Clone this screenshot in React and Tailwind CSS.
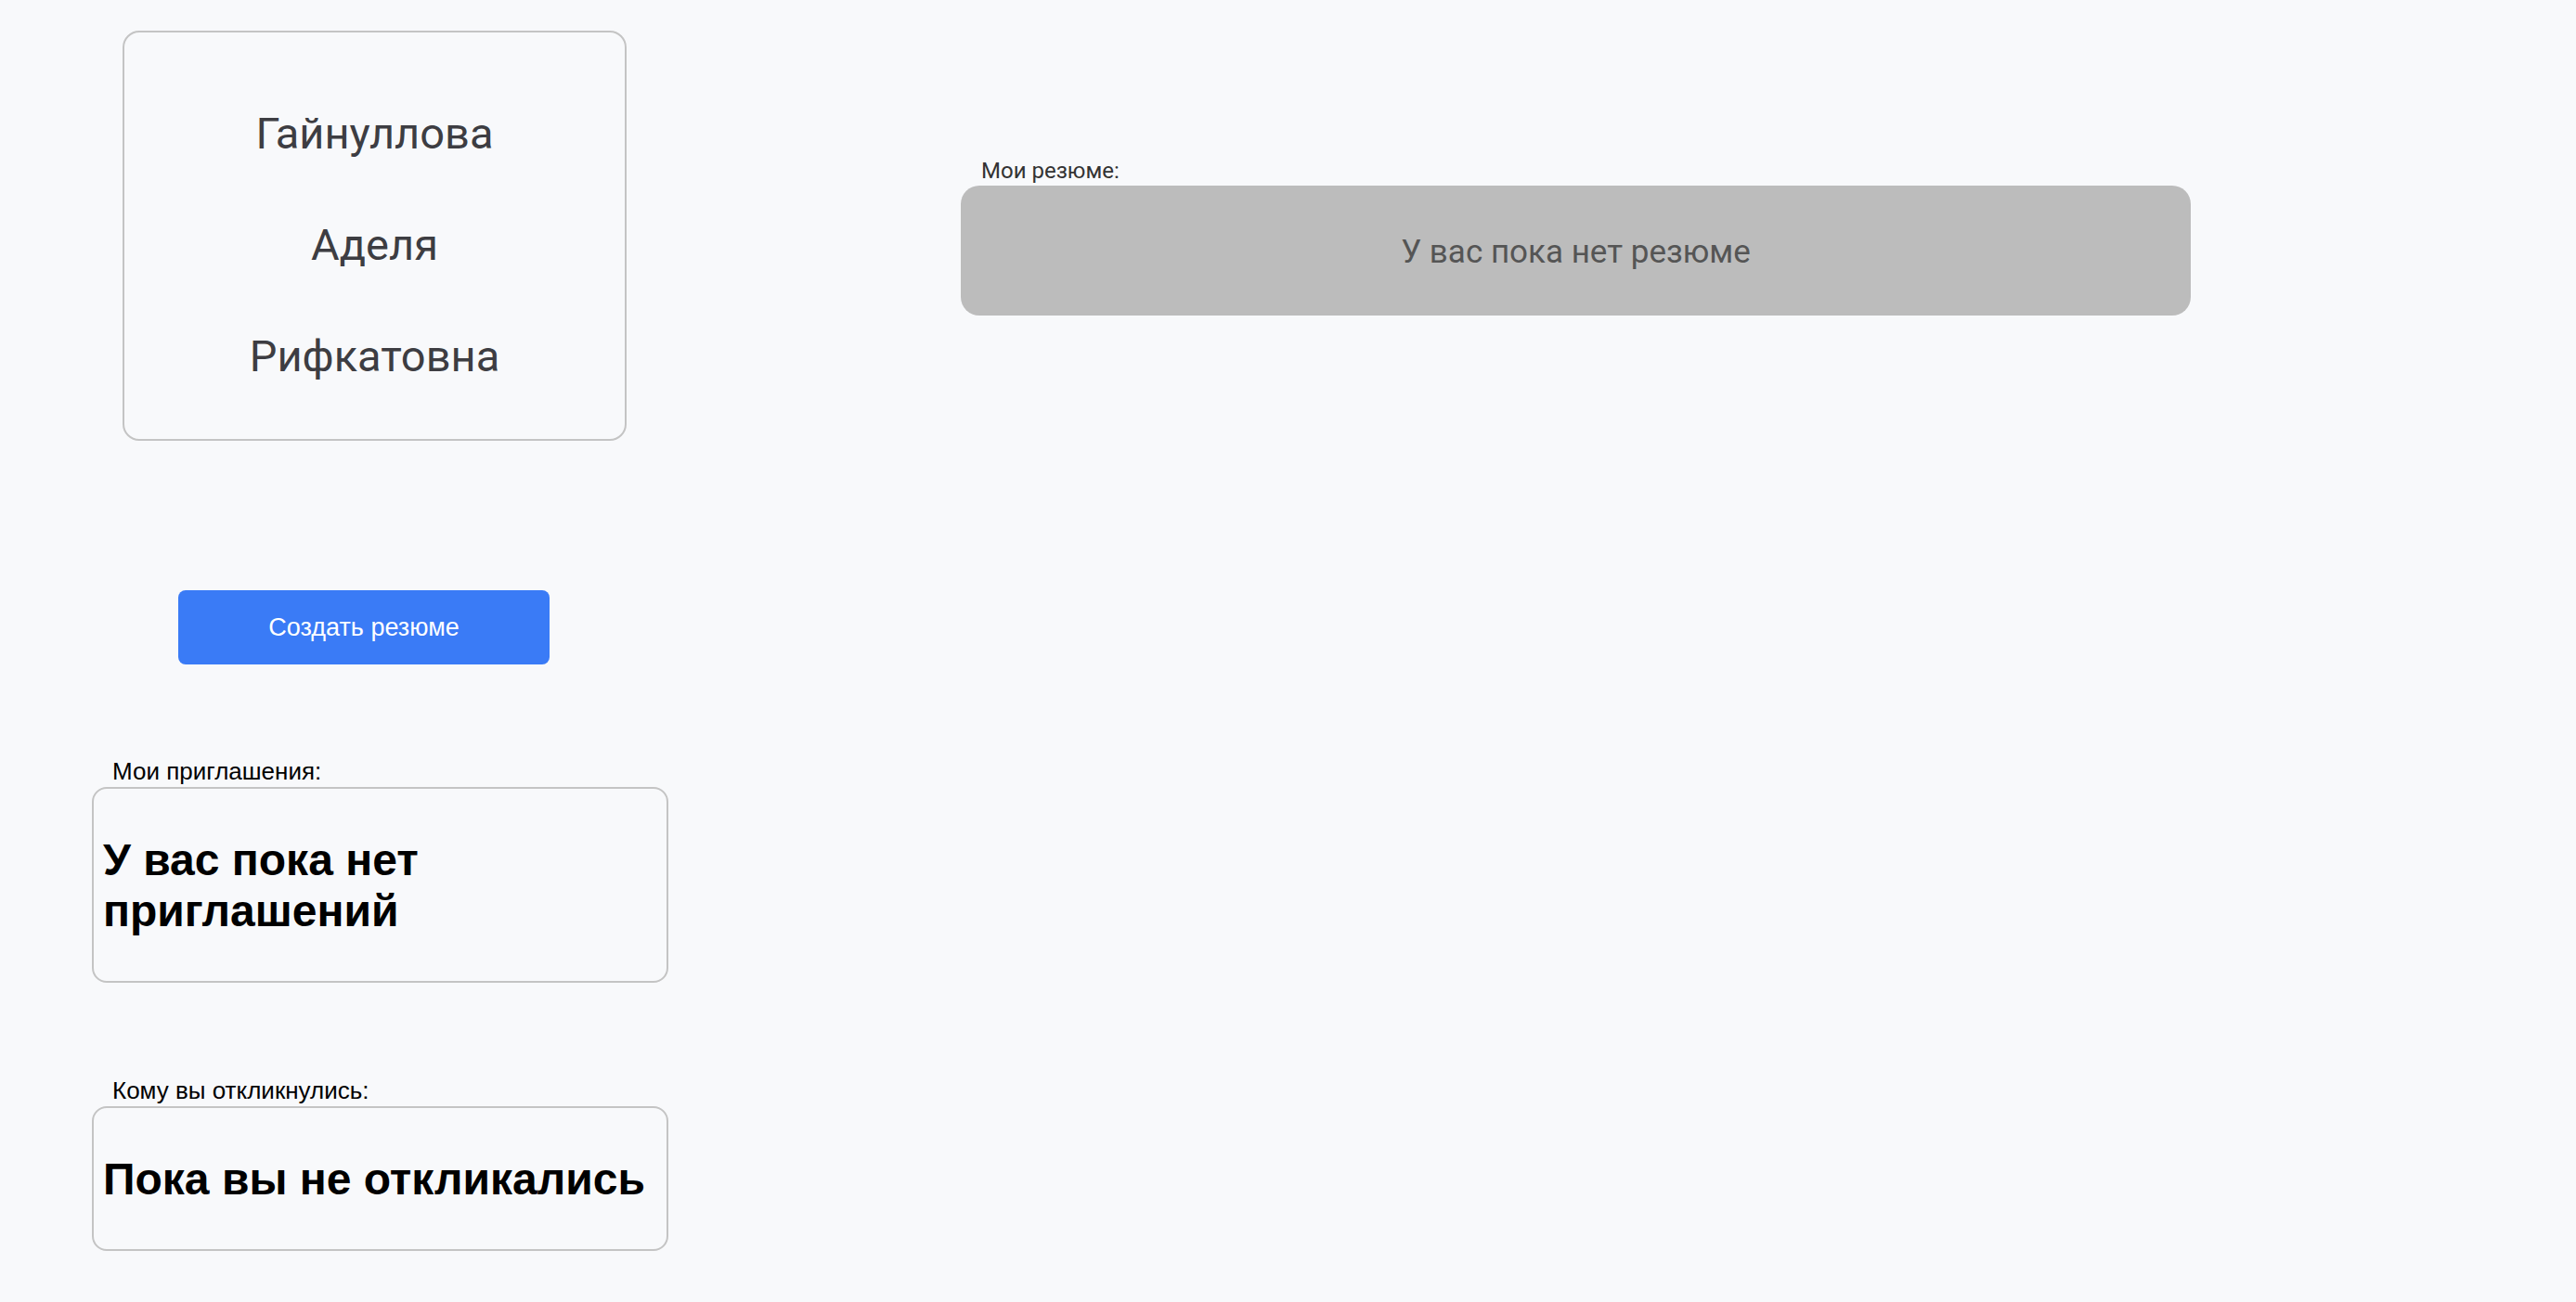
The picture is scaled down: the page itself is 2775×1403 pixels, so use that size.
export default function App() {
  return (
    <div className="min-h-screen bg-[#f8f9fb] flex">
      <aside className="w-[1035px] shrink-0 flex flex-col items-start">
        <NameCard lines={['Гайнуллова', 'Аделя', 'Рифкатовна']} />

        <button className="mt-[161px] ml-[192px] w-[400px] h-[80px] rounded-[8px] bg-[#3a7bf6] text-white text-[27px] font-['Liberation_Sans',Arial,sans-serif]">
          Создать резюме
        </button>

        <Section label="Мои приглашения:" className="mt-[101px]" height="h-[211px]">
          У вас пока нет приглашений
        </Section>

        <Section label="Кому вы откликнулись:" className="mt-[102px]" height="h-[156px]">
          Пока вы не откликались
        </Section>
      </aside>

      <main className="w-[1325px] shrink-0 pt-[171px] font-['Roboto',sans-serif]">
        <p className="ml-[22px] text-[24px] leading-[27px] text-[#333]">Мои резюме:</p>
        <div className="mt-[2px] h-[140px] pt-[4px] rounded-[20px] bg-[#bcbcbc] flex items-center justify-center">
          <p className="text-[35px] text-[#555]">У вас пока нет резюме</p>
        </div>
      </main>
    </div>
  )
}

function NameCard({ lines }) {
  return (
    <div className="mt-[33px] ml-[132px] w-[543px] h-[442px] pt-[49px] rounded-[18px] border-2 border-[#c4c4c4] font-['Roboto',sans-serif] text-[#3d3d42] text-center">
      {lines.map(line => (
        <p key={line} className="text-[47px] leading-[120px]">{line}</p>
      ))}
    </div>
  )
}

function Section({ label, className, height, children }) {
  return (
    <div className={`flex flex-col items-start font-['Liberation_Sans',Arial,sans-serif] ${className}`}>
      <p className="ml-[121px] text-[26px] text-black leading-[28px]">{label}</p>
      <div className={`mt-[3px] ml-[99px] w-[621px] ${height} rounded-[16px] border-2 border-[#c4c4c4] flex items-center pl-[10px] pr-[6px]`}>
        <h2 className="text-[48px] font-bold text-black leading-[55px]">{children}</h2>
      </div>
    </div>
  )
}
